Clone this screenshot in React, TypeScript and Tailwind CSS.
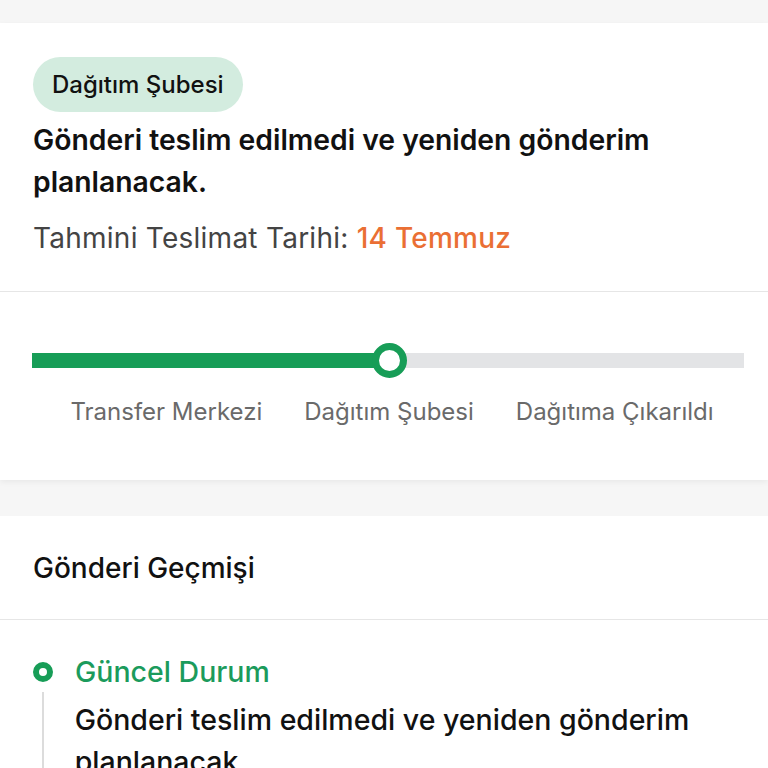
import React from "react";

export default function App() {
  return (
    <div className="min-h-[768px] bg-[#f6f6f6] pt-[23px]" style={{ fontFamily: "Inter, 'Noto Sans', sans-serif" }}>
      <div className="bg-white shadow-[0_2px_6px_rgba(0,0,0,0.06)]">
        <div className="px-[33px] pt-[34px] pb-[35px]">
          <div className="inline-flex h-[55px] items-center rounded-full bg-[#d3ecdf] px-[19px] text-[24px] font-medium text-[#111]">
            Dağıtım Şubesi
          </div>
          <div className="mt-[7px] text-[28.3px] font-semibold leading-[42px] text-[#111]">
            Gönderi teslim edilmedi ve yeniden gönderim planlanacak.
          </div>
          <div className="mt-[17px] text-[28px] leading-[36px] tracking-[0.25px] text-[#444]">
            Tahmini Teslimat Tarihi: <span className="font-medium text-[#ea6f34]">14 Temmuz</span>
          </div>
        </div>
        <div className="h-px bg-[#e6e6e6]" />
        <div className="pl-[32px] pr-[24px] pt-[52px] pb-[53px]">
          <div className="relative flex h-[32px] items-center">
            <div className="flex h-[15px] w-full">
              <div className="h-full w-[358px] bg-[#179d57]" />
              <div className="h-full flex-1 bg-[#e3e4e6]" />
            </div>
            <div className="absolute left-[340px] top-[-1.5px] h-[35px] w-[35px] rounded-full border-[7px] border-[#179d57] bg-white" />
          </div>
          <div className="mt-[21px] flex justify-center gap-[42px] pl-[8px] text-[24px] leading-[30px] text-[#6a6a6a]">
            <span>Transfer Merkezi</span>
            <span>Dağıtım Şubesi</span>
            <span>Dağıtıma Çıkarıldı</span>
          </div>
        </div>
      </div>
      <div className="mt-[36px] bg-white">
        <div className="flex h-[103px] items-center px-[33px] text-[28px] font-medium text-[#111]">
          Gönderi Geçmişi
        </div>
        <div className="h-px bg-[#e6e6e6]" />
        <div className="px-[33px] pt-[36px] pb-[40px]">
          <div className="flex items-center gap-[22px]">
            <div className="h-[20px] w-[20px] rounded-full border-[6px] border-[#179d57] bg-white" />
            <div className="text-[28.5px] font-medium leading-[32px] text-[#1b9b5c]">Güncel Durum</div>
          </div>
          <div className="flex">
            <div className="ml-[9px] mt-[4px] w-[2px] bg-[#dcdcdc]" />
            <div className="ml-[31px] pt-[11px] text-[28.5px] font-medium leading-[42px] text-[#111]">
              Gönderi teslim edilmedi ve yeniden gönderim planlanacak.
            </div>
          </div>
        </div>
      </div>
    </div>
  );
}
